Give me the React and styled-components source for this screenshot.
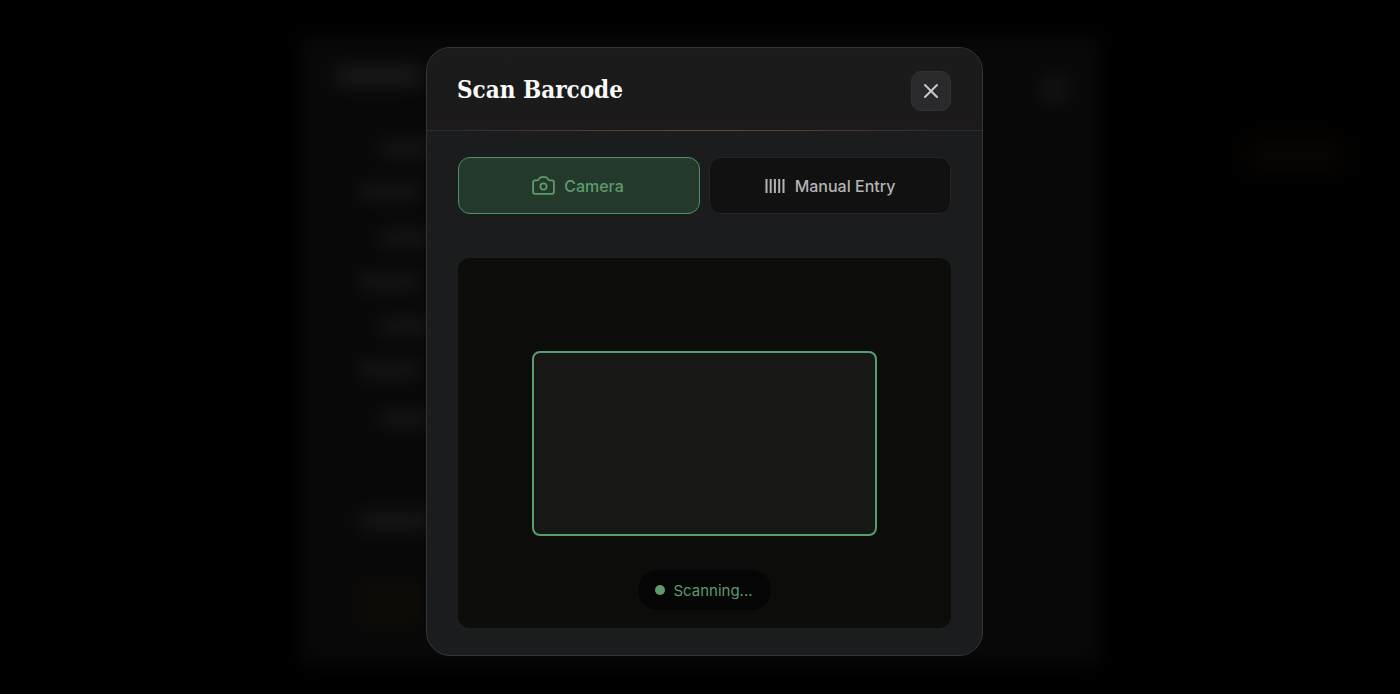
import React from 'react'
import styled, { createGlobalStyle } from 'styled-components'
import { Camera, X } from 'lucide-react'

const GlobalStyle = createGlobalStyle`
    html, body {
        margin: 0;
        padding: 0;
        height: 100%;
        background: #000;
    }

    * {
        box-sizing: border-box;
    }
`

const Page = styled.div`
    position: relative;
    width: 1400px;
    height: 694px;
    overflow: hidden;
    background: #000;
    font-family: Inter, "Liberation Sans", sans-serif;
`

/* what is left of the page behind the dialog */
const Backdrop = styled.div`
    position: absolute;
    left: 300px;
    top: 36px;
    width: 800px;
    height: 630px;
    padding: 30px 36px;
    display: flex;
    flex-direction: column;
    background: #080808;
    filter: blur(9px);
`

const GhostTop = styled.div`
    display: flex;
    justify-content: space-between;
    align-items: flex-start;
    margin-bottom: 46px;
    height: 30px;
`

const GhostRow = styled.div`
    width: ${props => props.$width}px;
    height: ${props => props.$height || 13}px;
    margin-left: ${props => props.$indent || 0}px;
    margin-top: ${props => props.$top || 0}px;
    background: ${props => props.$color || '#191919'};
`

const GhostCircle = styled.div`
    width: 30px;
    height: 30px;
    margin: 8px -6px 0 0;
    border-radius: 50%;
    background: #131313;
`

const GhostSide = styled.div`
    position: absolute;
    left: 1245px;
    top: 135px;
    width: 100px;
    height: 40px;
    background: #080402;
    filter: blur(12px);
`

const Overlay = styled.div`
    position: absolute;
    inset: 0;
    padding: 47px 0 0 426px;
`

const Modal = styled.div`
    width: 557px;
    height: 609px;
    display: flex;
    flex-direction: column;
    background: #1b1c1e;
    border: 1px solid #353537;
    border-radius: 24px;
    overflow: hidden;
`

const Header = styled.div`
    position: relative;
    height: 83px;
    flex: none;
    display: flex;
    align-items: center;
    justify-content: space-between;
    padding: 0 31px 0 30px;
    border-bottom: 1px solid #2c2c2e;
    background: linear-gradient(180deg, #1b1b1c, #1c1a1a);

    &::after {
        content: '';
        position: absolute;
        left: 0;
        right: 0;
        bottom: -1px;
        height: 1px;
        background: linear-gradient(90deg, transparent 5%, #6b4a3c 50%, transparent 92%);
    }
`

const Title = styled.h2`
    margin: 0;
    font-family: "DejaVu Serif Condensed", "DejaVu Serif", serif;
    font-stretch: condensed;
    font-size: 24px;
    font-weight: 700;
    color: #fafafa;
`

const CloseButton = styled.button`
    width: 40px;
    height: 40px;
    margin-top: 3px;
    padding: 0;
    display: flex;
    align-items: center;
    justify-content: center;
    color: #c9c9c9;
    background: #2a2a2c;
    border: 1px solid #323234;
    border-radius: 10px;
`

const Body = styled.div`
    flex: 1;
    display: flex;
    flex-direction: column;
    padding: 26px 31px 27px;
`

const Tabs = styled.div`
    display: grid;
    grid-template-columns: 242px 242px;
    gap: 9px;
    margin-bottom: 44px;
`

const Tab = styled.button`
    height: 57px;
    padding: 0 ${props => props.$active ? 3 : 0}px 0 0;
    display: flex;
    align-items: center;
    justify-content: center;
    gap: ${props => props.$active ? 8 : 6}px;
    font-family: inherit;
    font-size: 16px;
    font-weight: 500;
    color: ${props => props.$active ? '#5c9c6d' : '#b4b4b4'};
    background: ${props => props.$active ? '#25382c' : '#111112'};
    border: 1px solid ${props => props.$active ? '#538f64' : '#242426'};
    border-radius: 12px;
`

const Scanner = styled.div`
    flex: 1;
    display: flex;
    flex-direction: column;
    align-items: center;
    padding-top: 93px;
    background: #0c0c0a;
    border-radius: 12px;
`

const Frame = styled.div`
    width: 345px;
    height: 185px;
    background: #171715;
    border: 2.5px solid #5a9c6c;
    border-radius: 8px;
`

const Status = styled.div`
    margin-top: 34px;
    height: 40px;
    padding: 0 18px 0 17px;
    display: flex;
    align-items: center;
    gap: 8px;
    font-size: 15px;
    color: #5c9c6d;
    background: #050505;
    border-radius: 20px;
`

const Dot = styled.span`
    width: 10px;
    height: 10px;
    border-radius: 50%;
    background: #5c9c6d;
`

function BarcodeIcon() {
    return (
        <svg width="24" height="24" viewBox="0 0 24 24" fill="none" stroke="currentColor" strokeWidth="2" strokeLinecap="butt">
            <path d="M1.500 5v14M5.700 5v14M9.900 5v14M14.200 5v14M18.500 5v14" />
        </svg>
    )
}

export default function App() {
    return (
        <Page>
            <GlobalStyle />

            <GhostSide />
            <Backdrop>
                <GhostTop>
                    <GhostRow $width={85} $height={20} />
                    <GhostCircle />
                </GhostTop>
                <GhostRow $width={50} $indent={44} />
                <GhostRow $width={60} $indent={24} $top={30} />
                <GhostRow $width={50} $indent={44} $top={34} />
                <GhostRow $width={60} $indent={24} $top={30} />
                <GhostRow $width={50} $indent={44} $top={32} />
                <GhostRow $width={60} $indent={24} $top={30} />
                <GhostRow $width={50} $indent={44} $top={36} />
                <GhostRow $width={70} $indent={24} $top={88} $height={15} />
                <GhostRow $width={60} $indent={24} $top={50} $height={50} $color="#0e0b07" />
            </Backdrop>

            <Overlay>
                <Modal>
                    <Header>
                        <Title>Scan Barcode</Title>
                        <CloseButton aria-label="Close">
                            <X size={24} strokeWidth={2} />
                        </CloseButton>
                    </Header>

                    <Body>
                        <Tabs>
                            <Tab $active>
                                <Camera size={25} strokeWidth={1.7} />
                                Camera
                            </Tab>
                            <Tab>
                                <BarcodeIcon />
                                Manual Entry
                            </Tab>
                        </Tabs>

                        <Scanner>
                            <Frame />
                            <Status>
                                <Dot />
                                Scanning...
                            </Status>
                        </Scanner>
                    </Body>
                </Modal>
            </Overlay>
        </Page>
    )
}
